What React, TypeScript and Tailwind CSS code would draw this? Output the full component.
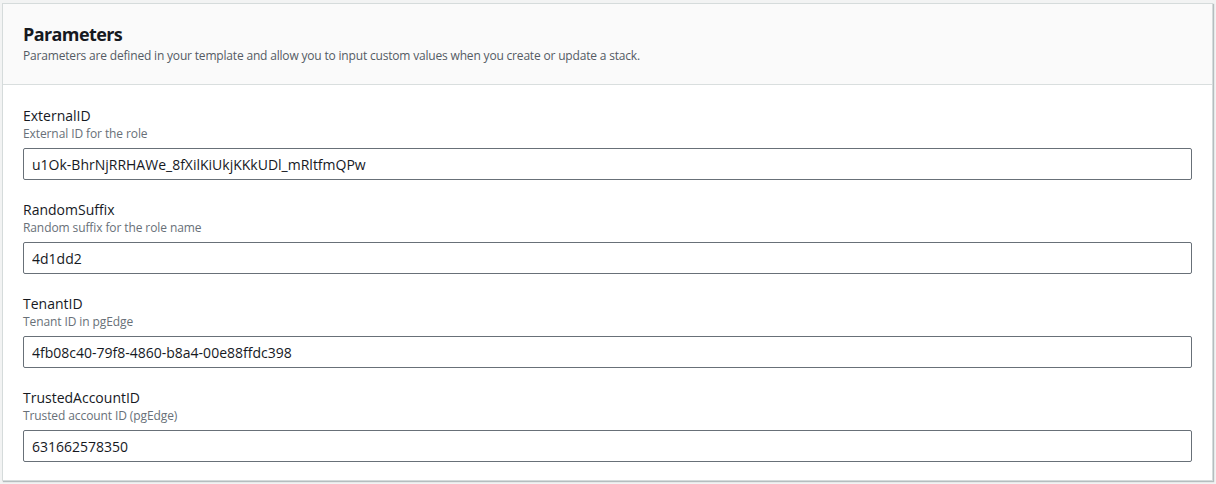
const params = [
  {
    name: "ExternalID",
    hint: "External ID for the role",
    value: "u1Ok-BhrNjRRHAWe_8fXilKiUkjKKkUDl_mRltfmQPw",
  },
  {
    name: "RandomSuffix",
    hint: "Random suffix for the role name",
    value: "4d1dd2",
  },
  {
    name: "TenantID",
    hint: "Tenant ID in pgEdge",
    value: "4fb08c40-79f8-4860-b8a4-00e88ffdc398",
  },
  {
    name: "TrustedAccountID",
    hint: "Trusted account ID (pgEdge)",
    value: "631662578350",
  },
];

export default function App() {
  return (
    <main
      className="h-[484px] w-[1216px] bg-[#f2f3f3] pt-[3px] pl-[2px] text-[#16191f]"
      style={{ fontFamily: '"Open Sans", "Noto Sans", sans-serif' }}
    >
      <section className="w-[1211px] border border-[#d5dbdb] bg-white shadow-[1px_1px_1px_rgba(0,28,36,0.25)]">
        {/* header */}
        <div className="h-[81px] border-b border-[#d9dede] bg-[#fafafa] px-5 pt-[19px]">
          <h2 className="text-[18px] leading-[22px] font-bold tracking-[-0.6px]">Parameters</h2>
          <p className="mt-[3px] text-[12px] leading-4 tracking-[-0.18px] text-[#545b64]">
            Parameters are defined in your template and allow you to input custom values when you
            create or update a stack.
          </p>
        </div>

        {/* fields */}
        <div className="flex flex-col gap-5 px-5 pt-[21px] pb-[18px]">
          {params.map((p) => (
            <div key={p.name}>
              <label className="block text-[14px] leading-5">{p.name}</label>
              <div className="text-[12px] leading-4 tracking-[-0.1px] text-[#687078]">{p.hint}</div>
              <input
                readOnly
                value={p.value}
                className="mt-[6px] h-8 w-full rounded-[2px] border border-[#687078] px-[8px] text-[14px] text-[#16191f] outline-none"
              />
            </div>
          ))}
        </div>
      </section>
    </main>
  );
}
